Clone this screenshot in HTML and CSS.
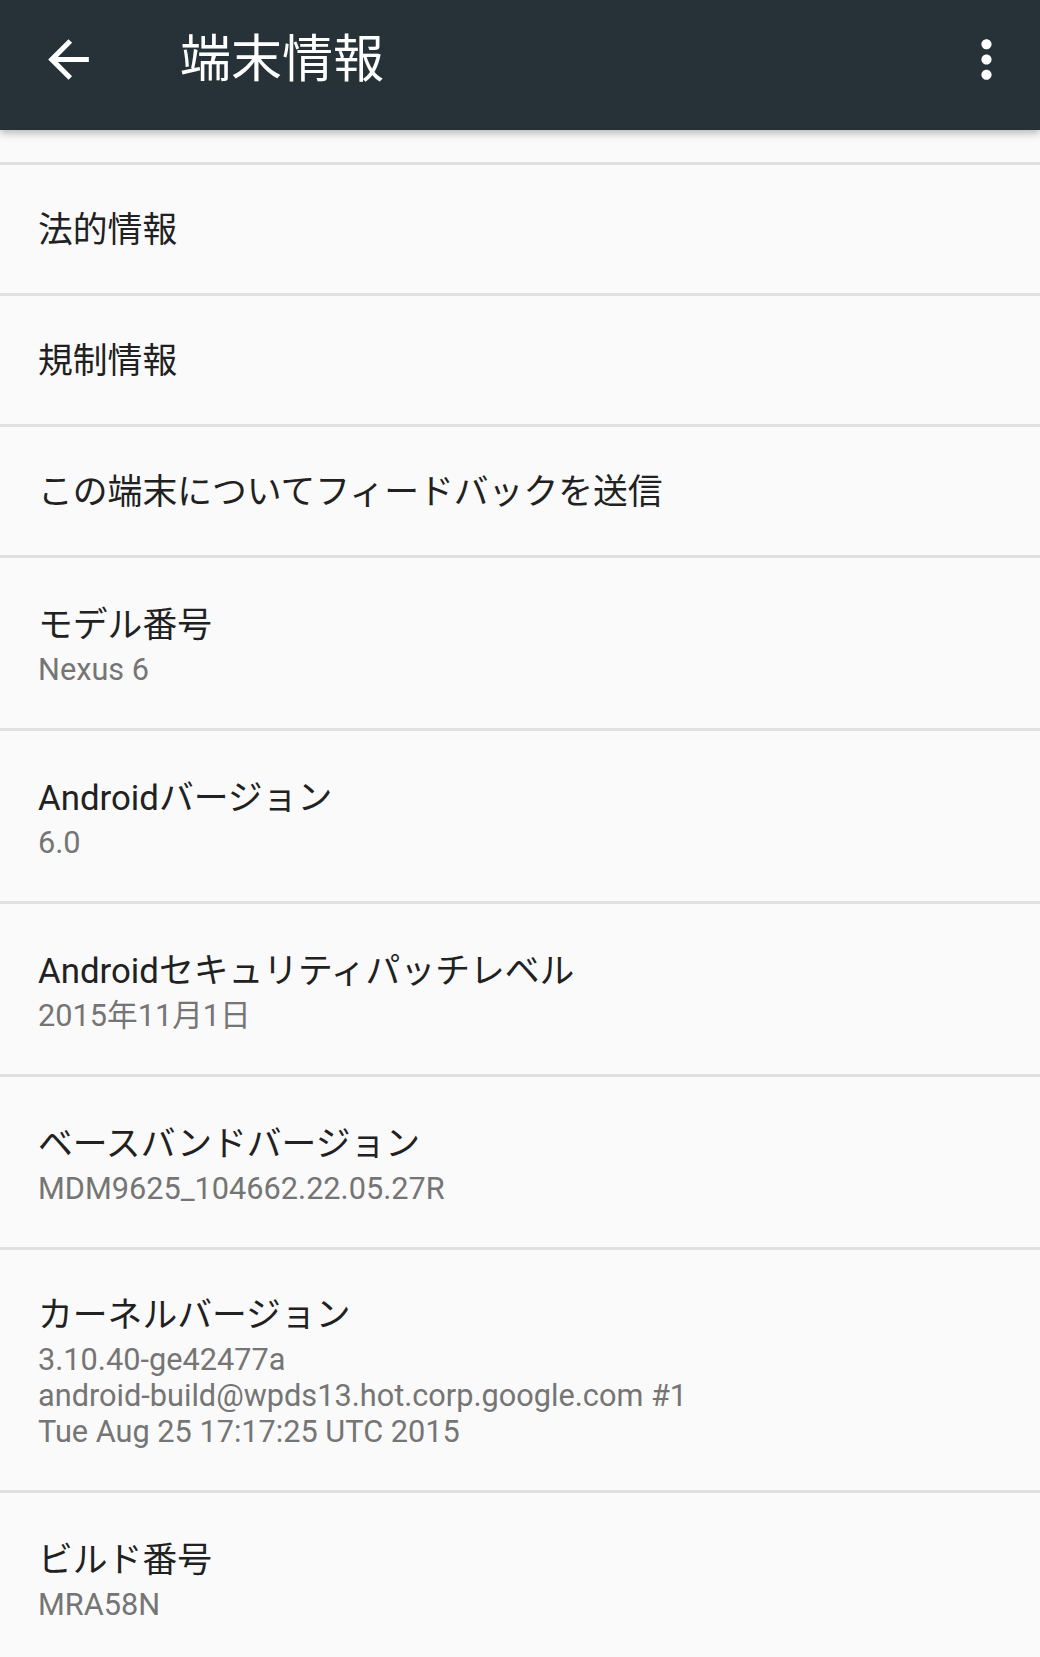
FILE: index.html
```
<!DOCTYPE html>
<html lang="ja">
<head>
    <meta charset="UTF-8">
    <meta name="viewport" content="width=device-width, initial-scale=1.0">
    <title>端末情報</title>
    <link rel="stylesheet" href="styles.css">
</head>
<body>

    <header class="appbar">
        <svg class="appbar-icon" viewBox="0 0 24 24"><path d="M20 11H7.83l5.59-5.59L12 4l-8 8 8 8 1.41-1.41L7.83 13H20v-2z"/></svg>
        <h1 class="appbar-title">端末情報</h1>
        <svg class="appbar-icon more" viewBox="0 0 24 24"><path d="M12 8c1.1 0 2-.9 2-2s-.9-2-2-2-2 .9-2 2 .9 2 2 2zm0 2c-1.1 0-2 .9-2 2s.9 2 2 2 2-.9 2-2-.9-2-2-2zm0 6c-1.1 0-2 .9-2 2s.9 2 2 2 2-.9 2-2-.9-2-2-2z"/></svg>
    </header>

    <ul class="prefs">
        <li class="pref cut"></li>
        <li class="pref single"><span class="pref-title">法的情報</span></li>
        <li class="pref single"><span class="pref-title">規制情報</span></li>
        <li class="pref single"><span class="pref-title">この端末についてフィードバックを送信</span></li>
        <li class="pref double">
            <span class="pref-title">モデル番号</span>
            <span class="pref-summary">Nexus 6</span>
        </li>
        <li class="pref double">
            <span class="pref-title">Androidバージョン</span>
            <span class="pref-summary">6.0</span>
        </li>
        <li class="pref double">
            <span class="pref-title">Androidセキュリティパッチレベル</span>
            <span class="pref-summary">2015年11月1日</span>
        </li>
        <li class="pref double">
            <span class="pref-title">ベースバンドバージョン</span>
            <span class="pref-summary">MDM9625_104662.22.05.27R</span>
        </li>
        <li class="pref kernel">
            <span class="pref-title">カーネルバージョン</span>
            <span class="pref-summary">3.10.40-ge42477a<br>android-build@wpds13.hot.corp.google.com #1<br>Tue Aug 25 17:17:25 UTC 2015</span>
        </li>
        <li class="pref double last">
            <span class="pref-title">ビルド番号</span>
            <span class="pref-summary">MRA58N</span>
        </li>
    </ul>

</body>
</html>
```

FILE: styles.css
```
html, body {
    height: 1657px;
    overflow: hidden;
}

body {
    margin: 0;
    background: #fafafa;
    font-family: Roboto, "Noto Sans CJK JP", sans-serif;
}

.appbar {
    position: relative;
    z-index: 1;
    display: flex;
    align-items: center;
    height: 130px;
    padding: 0 23px 11px 38px;
    box-sizing: border-box;
    background: #263238;
    box-shadow: 0 3px 8px rgba(0, 0, 0, 0.28);
}

.appbar-icon {
    width: 61px;
    height: 61px;
    fill: #fff;
    flex: none;
}

.appbar-title {
    flex: 1;
    margin: 0 0 0 81px;
    font-size: 51px;
    font-weight: normal;
    line-height: 60px;
    color: #fff;
}

.prefs {
    list-style: none;
    margin: 0;
    padding: 0;
}

.pref {
    display: flex;
    flex-direction: column;
    justify-content: center;
    padding-left: 38px;
    border-bottom: 3px solid #e0e0e0;
}

.pref.cut {
    height: 32px;
}

.pref.single {
    height: 126px;
    padding-top: 2px;
}

.pref.double {
    height: 167px;
    padding-top: 3px;
}

.pref.kernel {
    height: 238px;
    padding-top: 2px;
}

.pref.last {
    border-bottom: none;
}

.pref-title {
    font-size: 34.8px;
    line-height: 46px;
    color: #212121;
}

.pref-summary {
    margin-top: 4px;
    font-size: 30.7px;
    line-height: 36px;
    color: #757575;
}
```
